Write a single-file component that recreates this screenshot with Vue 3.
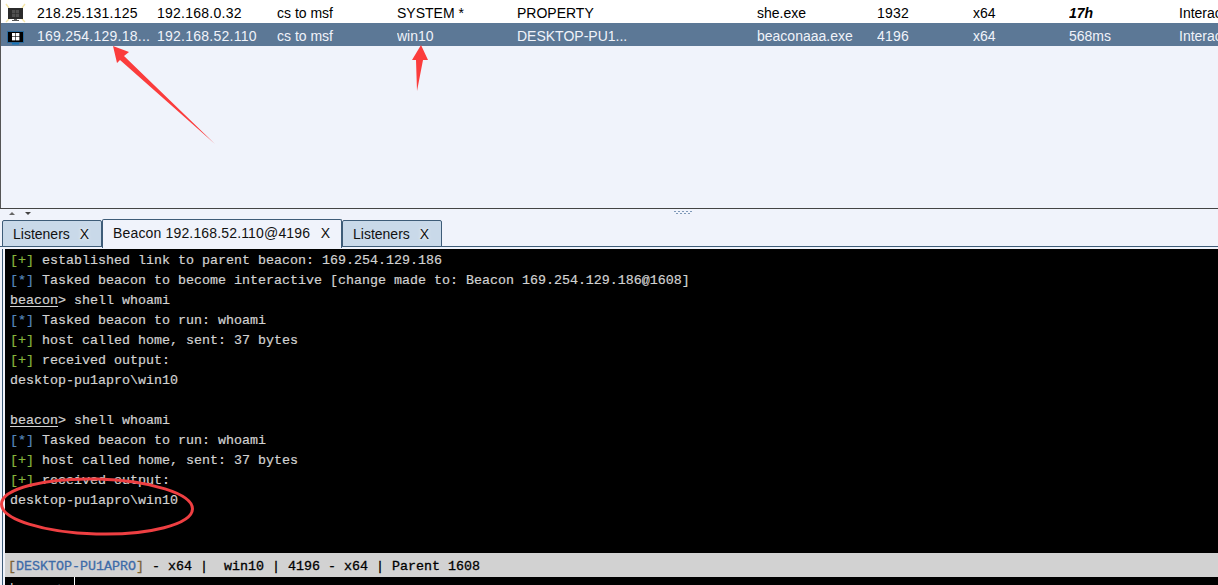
<script setup>
const widths = [120, 120, 120, 120, 240, 120, 96, 96, 110, 120]
const numericCols = [0, 1, 6]
const rows = [
  { id: 'a', selected: false, cells: ['218.25.131.125', '192.168.0.32', 'cs to msf', 'SYSTEM *', 'PROPERTY', 'she.exe', '1932', 'x64', '17h', 'Interact'] },
  { id: 'b', selected: true, cells: ['169.254.129.18...', '192.168.52.110', 'cs to msf', 'win10', 'DESKTOP-PU1...', 'beaconaaa.exe', '4196', 'x64', '568ms', 'Interact'] }
]
const tabs = [
  { label: 'Listeners', active: false },
  { label: 'Beacon 192.168.52.110@4196', active: true },
  { label: 'Listeners', active: false }
]
const lines = [
  { t: 'plus', s: 'established link to parent beacon: 169.254.129.186' },
  { t: 'star', s: 'Tasked beacon to become interactive [change made to: Beacon 169.254.129.186@1608]' },
  { t: 'prompt', s: 'shell whoami' },
  { t: 'star', s: 'Tasked beacon to run: whoami' },
  { t: 'plus', s: 'host called home, sent: 37 bytes' },
  { t: 'plus', s: 'received output:' },
  { t: 'text', s: 'desktop-pu1apro\\win10' },
  { t: 'text', s: '\u00a0' },
  { t: 'prompt', s: 'shell whoami' },
  { t: 'star', s: 'Tasked beacon to run: whoami' },
  { t: 'plus', s: 'host called home, sent: 37 bytes' },
  { t: 'plus', s: 'received output:' },
  { t: 'text', s: 'desktop-pu1apro\\win10' }
]
</script>

<template>
  <div class="app">
    <section class="table">
      <div v-for="r in rows" :key="r.id" class="row" :class="{ selected: r.selected }">
        <div class="icon-cell">
          <svg v-if="!r.selected" width="24" height="23" viewBox="0 0 24 23">
            <path d="M3 4 6 8M22 4 19 8M3 22 6 19M22 22 19 19" stroke="#f5e6a8" stroke-width="1.4" fill="none" />
            <rect x="5" y="8" width="15" height="11" fill="#2b2b2b" />
            <g fill="#4f4f4f">
              <rect x="9" y="10" width="3.2" height="3.2" />
              <rect x="12.8" y="10" width="3.2" height="3.2" />
              <rect x="9" y="13.8" width="3.2" height="3.2" />
              <rect x="12.8" y="13.8" width="3.2" height="3.2" />
            </g>
            <rect x="11" y="19" width="3" height="1" fill="#666" />
            <rect x="9" y="20" width="7" height="1" fill="#555" />
          </svg>
          <svg v-else width="24" height="23" viewBox="0 0 24 23">
            <rect x="4.5" y="8.5" width="16" height="11" fill="#000" stroke="#2a6a9c" stroke-width="1" />
            <g fill="#fff">
              <rect x="9" y="10" width="3.4" height="3.4" />
              <rect x="13" y="10" width="3.4" height="3.4" />
              <rect x="9" y="14" width="3.4" height="3.4" />
              <rect x="13" y="14" width="3.4" height="3.4" />
            </g>
            <rect x="9" y="20" width="7" height="1.5" fill="#1574b8" />
          </svg>
        </div>
        <div
          v-for="(c, i) in r.cells"
          :key="i"
          class="cell"
          :class="{ bold: c === '17h', num: numericCols.includes(i) }"
          :style="{ width: widths[i] + 'px' }"
        >{{ c }}</div>
      </div>
    </section>

    <div class="splitter">
      <div class="arrows"><i class="up"></i><i class="down"></i></div>
      <div class="grip">
        <div class="grip-row"><b v-for="n in 5" :key="n"></b></div>
        <div class="grip-row"><b v-for="n in 4" :key="n"></b></div>
      </div>
    </div>

    <nav class="tabs">
      <div v-for="(t, i) in tabs" :key="i" class="tab" :class="{ active: t.active }">
        <span class="tab-label">{{ t.label }}</span><span class="x">X</span>
      </div>
    </nav>

    <div class="console-wrap">
      <div class="console">
        <div v-for="(l, i) in lines" :key="i" class="line">
          <template v-if="l.t === 'plus'"><span class="green">[+]</span> {{ l.s }}</template>
          <template v-else-if="l.t === 'star'"><span class="blue">[*]</span> {{ l.s }}</template>
          <template v-else-if="l.t === 'prompt'"><span class="prompt"><u>beacon</u>&gt;</span> {{ l.s }}</template>
          <template v-else>{{ l.s }}</template>
        </div>
      </div>
      <div class="status">
        <span class="tan">[</span><span class="host">DESKTOP-PU1APRO</span><span class="tan">]</span> - x64 |&nbsp; win10 | 4196 - x64 | Parent 1608
      </div>
      <div class="input">
        <div class="input-prompt">beacon&gt;</div>
      </div>
    </div>

    <svg class="marks" width="1218" height="585" viewBox="0 0 1218 585">
      <polygon points="113,46 129,52 124,56 215,144 120,60 117,63" fill="#fb3c3c" />
      <polygon points="421,45 428,60 423,60 417,91 416,60 412,60" fill="#fb3c3c" />
      <ellipse cx="97" cy="506.5" rx="95.5" ry="27.5" transform="rotate(1.5 97 506.5)" fill="none" stroke="#ee3f42" stroke-width="3" />
    </svg>
  </div>
</template>

<style scoped>
.app {
  position: relative;
  width: 1218px;
  height: 585px;
  overflow: hidden;
  background: #f0f3fb;
  font-family: "Liberation Sans", Arial, sans-serif;
  font-size: 14px;
}
.table {
  height: 208px;
  box-sizing: border-box;
  border-left: 1px solid #555;
  background: #f0f3fb;
}
.row {
  display: flex;
  align-items: center;
  height: 23px;
  background: #fff;
  color: #000;
  white-space: nowrap;
}
.row.selected {
  background: #5c7896;
  color: #f0f3fa;
}
.icon-cell {
  width: 36px;
  padding-left: 2px;
  box-sizing: border-box;
  flex: none;
  display: flex;
  align-items: center;
  height: 100%;
}
.cell { flex: none; overflow: hidden; padding-top: 2px; box-sizing: border-box; }
.num { letter-spacing: 0.25px; }
.bold { font-weight: bold; font-style: italic; }
.splitter {
  height: 12px;
  box-sizing: border-box;
  border-top: 1px solid #444;
  display: flex;
  align-items: flex-start;
}
.arrows {
  display: flex;
  gap: 10px;
  padding: 3px 0 0 9px;
  width: 668px;
  box-sizing: border-box;
}
.arrows i { width: 0; height: 0; border-left: 3px solid transparent; border-right: 3px solid transparent; }
.arrows .up { border-bottom: 3px solid #666; }
.arrows .down { border-top: 3px solid #444; }
.grip { padding-top: 2px; margin-left: 6px; }
.grip-row { display: flex; gap: 2px; margin-bottom: 1px; }
.grip-row:last-child { margin-left: 2px; }
.grip-row b { width: 2px; height: 1px; background: #7f99b8; }
.tabs {
  display: flex;
  align-items: flex-end;
  height: 27px;
  padding-left: 2px;
  box-sizing: border-box;
  border-bottom: 1px solid #3e5c78;
}
.tab {
  box-sizing: border-box;
  height: 27px;
  display: flex;
  justify-content: space-between;
  align-items: center;
  padding: 1px 12px 0 10px;
  width: 100px;
  background: #c9d9e9;
  border: 1px solid #3e5c78;
  border-radius: 2px 2px 0 0;
  color: #111;
  margin-bottom: -1px;
}
.tab.active {
  width: 240px;
  height: 29px;
  margin-bottom: -2px;
  background: #f0f3fb;
  border-bottom: none;
  padding: 0 11px 3px 10px;
  position: relative;
}
.tab.active .tab-label { letter-spacing: 0.16px; }
.x { text-shadow: 0 0 4px #f4f8ff, 0 0 2px #f4f8ff; }
.console-wrap {
  margin: 2px 0 0 2px;
  padding-left: 2px;
  border-left: 1px solid #3e5c78;
  height: 336px;
  display: flex;
  flex-direction: column;
}
.console {
  flex: none;
  height: 304px;
  box-sizing: border-box;
  background: #000;
  padding: 2px 0 0 5px;
  font-family: "Liberation Mono", "Courier New", monospace;
  font-size: 13.33px;
  color: #d2d2d2;
  -webkit-text-stroke: 0.2px #d2d2d2;
}
.line { height: 20px; line-height: 20px; white-space: pre; }
.green { color: #86b43c; -webkit-text-stroke-color: #86b43c; }
.blue { color: #5586bb; -webkit-text-stroke-color: #5586bb; }
.prompt u { text-underline-offset: 2px; }
.status {
  height: 24px;
  line-height: 27px;
  background: #d2d2d2;
  padding-left: 3px;
  font-family: "Liberation Mono", "Courier New", monospace;
  font-size: 13.33px;
  color: #000;
  white-space: pre;
  -webkit-text-stroke: 0.3px #000;
}
.tan { color: #7a6238; -webkit-text-stroke-color: #7a6238; }
.host { color: #3d6ba8; -webkit-text-stroke-color: #3d6ba8; }
.input {
  height: 8px;
  background: #000;
  display: flex;
  overflow: hidden;
}
.input-prompt {
  border-right: 1px solid #fff;
  padding: 4px 0 0 5px;
  width: 64px;
  height: 4px;
  overflow: hidden;
  font-family: "Liberation Mono", "Courier New", monospace;
  font-size: 13.33px;
  line-height: 16px;
  color: #d2d2d2;
}
.marks {
  position: absolute;
  left: 0;
  top: 0;
  pointer-events: none;
}
</style>
